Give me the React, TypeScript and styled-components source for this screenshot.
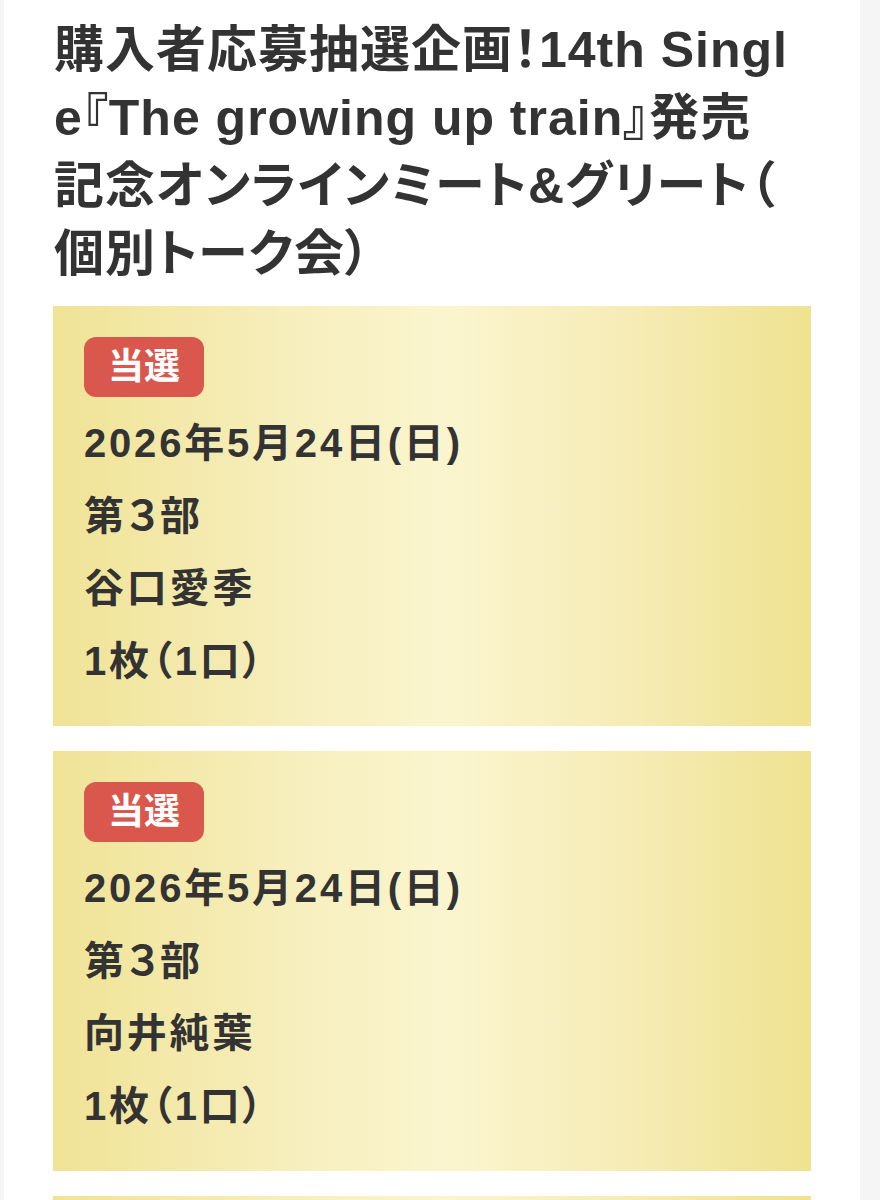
import styled, { createGlobalStyle } from 'styled-components';

const GlobalStyle = createGlobalStyle`
  html, body {
    margin: 0;
    padding: 0;
    background: #f5f5f5;
  }
  body {
    font-family: "Liberation Sans", "Noto Sans CJK JP", sans-serif;
    color: #333333;
  }
`;

type Entry = {
  status: string;
  date: string;
  part: string;
  member: string;
  count: string;
};

const titleLines = [
  '購入者応募抽選企画！14th Singl',
  'e『The growing up train』発売',
  '記念オンラインミート&グリート（',
  '個別トーク会）',
];

const entries: Entry[] = [
  { status: '当選', date: '2026年5月24日(日)', part: '第３部', member: '谷口愛季', count: '1枚（1口）' },
  { status: '当選', date: '2026年5月24日(日)', part: '第３部', member: '向井純葉', count: '1枚（1口）' },
  { status: '当選', date: '2026年5月24日(日)', part: '第４部', member: '谷口愛季', count: '1枚（1口）' },
];

const App = () => {
  return (
    <>
      <GlobalStyle />
      <Page>
        <Title>
          {titleLines.map((line) => (
            <TitleLine key={line}>{line}</TitleLine>
          ))}
        </Title>
        <CardList>
          {entries.map((entry, i) => (
            <Card key={i}>
              <Badge>{entry.status}</Badge>
              <Detail>{entry.date}</Detail>
              <Detail>{entry.part}</Detail>
              <Detail>{entry.member}</Detail>
              <Detail>{entry.count}</Detail>
            </Card>
          ))}
        </CardList>
      </Page>
    </>
  );
};

export default App;

const Page = styled.main`
  box-sizing: border-box;
  width: 856px;
  min-height: 100vh;
  margin-left: 4px;
  padding: 16px 49px 40px;
  background: #ffffff;
`;

const Title = styled.h1`
  margin: 0 0 18px;
  font-size: 50px;
  line-height: 68px;
  font-weight: 700;
  color: #333333;
  font-feature-settings: "palt";
  letter-spacing: 1px;
`;

const TitleLine = styled.span`
  display: block;
  white-space: nowrap;
  padding-left: 1px;
`;

const CardList = styled.div`
  display: flex;
  flex-direction: column;
  gap: 25px;
`;

const Card = styled.section`
  box-sizing: border-box;
  height: 420px;
  padding: 31px 31px 31px;
  background: linear-gradient(90deg, #f0e396 0%, #f6eebb 30%, #fbf5cf 52%, #f6ecb7 75%, #efe290 100%);
`;

const Badge = styled.div`
  display: inline-block;
  height: 60px;
  padding: 0 24px;
  margin-bottom: 10px;
  border-radius: 12px;
  background: #d9574c;
  color: #ffffff;
  font-size: 36px;
  line-height: 60px;
  font-weight: 700;
`;

const Detail = styled.div`
  font-size: 40px;
  line-height: 72.5px;
  font-weight: 700;
  color: #333333;
  font-feature-settings: "palt";
  letter-spacing: 2.8px;
`;
